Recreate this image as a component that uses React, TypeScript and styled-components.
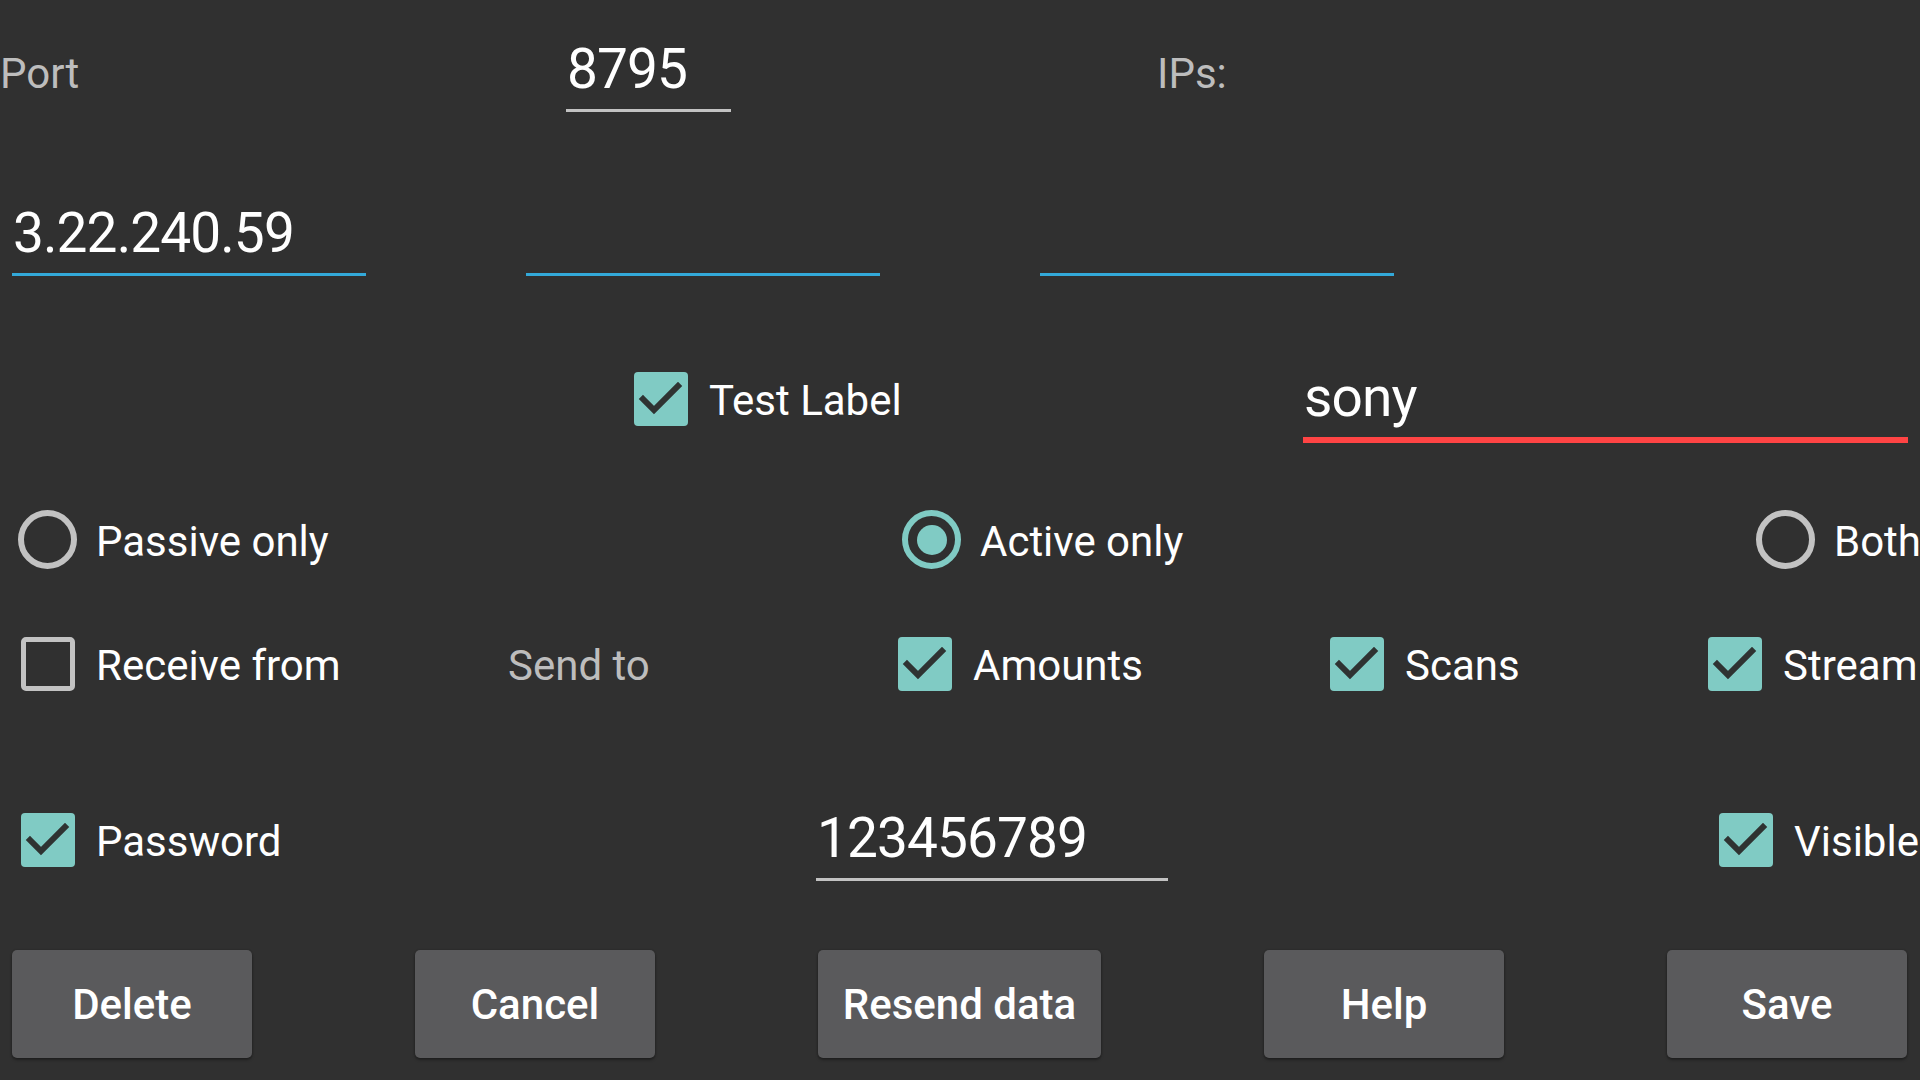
import React from "react";
import styled, { createGlobalStyle } from "styled-components";

const Global = createGlobalStyle`
  html, body {
    margin: 0;
    padding: 0;
    background: #303030;
  }
  body {
    font-family: Roboto, "Noto Sans", "Liberation Sans", sans-serif;
    color: #ffffff;
    overflow: hidden;
  }
`;

const Page = styled.div`
  width: 1920px;
  height: 1080px;
  background: #303030;
  display: flex;
  flex-direction: column;
  overflow: hidden;
`;

const Row = styled.div<{ $mt: number; $pl?: number; $cols?: string }>`
  display: grid;
  grid-template-columns: ${(p) => p.$cols || "auto"};
  align-items: start;
  margin-top: ${(p) => p.$mt}px;
  padding-left: ${(p) => p.$pl ?? 0}px;
`;

const BaselineRow = styled.div<{ $mt: number }>`
  display: flex;
  align-items: baseline;
  margin-top: ${(p) => p.$mt}px;
`;

const Label = styled.span<{ $w?: number; $muted?: boolean; $ml?: number }>`
  display: inline-block;
  font-size: 42px;
  line-height: 42px;
  color: ${(p) => (p.$muted ? "#bdbdbd" : "#ffffff")};
  white-space: nowrap;
  ${(p) => (p.$w ? `width: ${p.$w}px;` : "")}
  ${(p) => (p.$ml ? `margin-left: ${p.$ml}px;` : "")}
`;

const Edit = styled.div<{ $w: number; $line: string; $thick?: number; $ml?: number }>`
  width: ${(p) => p.$w}px;
  font-size: 55px;
  line-height: 55px;
  letter-spacing: -0.9px;
  height: 55px;
  padding: 0 0 12px 1px;
  border-bottom: ${(p) => p.$thick ?? 3}px solid ${(p) => p.$line};
  color: #ffffff;
  white-space: nowrap;
  ${(p) => (p.$ml ? `margin-left: ${p.$ml}px;` : "")}
`;

const EditRow = styled.div<{ $mt: number }>`
  display: flex;
  gap: 160px;
  padding-left: 12px;
  margin-top: ${(p) => p.$mt}px;
`;

const Option = styled.div<{ $mt?: number; $gap?: number }>`
  display: flex;
  align-items: center;
  gap: ${(p) => p.$gap ?? 21}px;
  margin-top: ${(p) => p.$mt ?? 0}px;
`;

const OptionText = styled.span<{ $muted?: boolean }>`
  font-size: 42px;
  line-height: 50px;
  margin-top: 4px;
  white-space: nowrap;
  color: ${(p) => (p.$muted ? "#bdbdbd" : "#ffffff")};
`;

const Box = styled.div<{ $checked: boolean }>`
  flex: none;
  box-sizing: border-box;
  width: 54px;
  height: 54px;
  border-radius: ${(p) => (p.$checked ? 4 : 5)}px;
  background: ${(p) => (p.$checked ? "#80cbc4" : "transparent")};
  border: ${(p) => (p.$checked ? "none" : "5px solid #c2c2c2")};
  display: flex;
  align-items: center;
  justify-content: center;
`;

const RadioRing = styled.div<{ $on: boolean }>`
  flex: none;
  box-sizing: border-box;
  width: 59px;
  height: 59px;
  border-radius: 50%;
  border: 6px solid ${(p) => (p.$on ? "#80cbc4" : "#c2c2c2")};
  display: flex;
  align-items: center;
  justify-content: center;
`;

const RadioDot = styled.div`
  width: 30px;
  height: 30px;
  border-radius: 50%;
  background: #80cbc4;
`;

const ButtonBar = styled.div<{ $mt: number }>`
  display: flex;
  justify-content: space-between;
  padding: 0 13px 0 12px;
  margin-top: ${(p) => p.$mt}px;
`;

const Button = styled.button<{ $w: number }>`
  width: ${(p) => p.$w}px;
  height: 108px;
  border: none;
  border-radius: 5px;
  background: #5a5a5c;
  color: #ffffff;
  font-family: Roboto, "Noto Sans", "Liberation Sans", sans-serif;
  font-size: 42px;
  font-weight: 500;
  padding: 0;
  box-shadow: 0 2px 3px rgba(0, 0, 0, 0.35), 0 0 2px rgba(0, 0, 0, 0.2);
  cursor: pointer;
`;

const Check = () => (
  <svg width="54" height="54" viewBox="0 0 54 54">
    <polyline
      points="9,27 20,38 44,14"
      fill="none"
      stroke="#2f3332"
      strokeWidth="6"
      strokeLinecap="square"
      strokeLinejoin="miter"
    />
  </svg>
);

const CheckOption = ({
  label,
  checked,
  mt,
}: {
  label: string;
  checked: boolean;
  mt?: number;
}) => (
  <Option $mt={mt} $gap={21}>
    <Box $checked={checked}>{checked && <Check />}</Box>
    <OptionText>{label}</OptionText>
  </Option>
);

const RadioOption = ({ label, on }: { label: string; on: boolean }) => (
  <Option $gap={19}>
    <RadioRing $on={on}>{on && <RadioDot />}</RadioRing>
    <OptionText>{label}</OptionText>
  </Option>
);

export default function App() {
  return (
    <>
      <Global />
      <Page>
        <BaselineRow $mt={42}>
          <Label $w={566} $muted>
            Port
          </Label>
          <Edit $w={164} $line="#c2c2c2">
            8795
          </Edit>
          <Label $muted $ml={426}>
            IPs:
          </Label>
        </BaselineRow>

        <EditRow $mt={94}>
          <Edit $w={353} $line="#33a9d9">
            3.22.240.59
          </Edit>
          <Edit $w={353} $line="#33a9d9" />
          <Edit $w={353} $line="#33a9d9" />
        </EditRow>

        <Row $mt={94} $pl={634} $cols="669px auto">
          <CheckOption label="Test Label" checked mt={2} />
          <Edit $w={604} $line="#ff4444" $thick={6}>
            sony
          </Edit>
        </Row>

        <Row $mt={67} $pl={18} $cols="884px 854px auto">
          <RadioOption label="Passive only" on={false} />
          <RadioOption label="Active only" on />
          <RadioOption label="Both" on={false} />
        </Row>

        <Row $mt={68} $pl={21} $cols="487px 390px 432px 378px auto">
          <CheckOption label="Receive from" checked={false} />
          <OptionText $muted>Send to</OptionText>
          <CheckOption label="Amounts" checked />
          <CheckOption label="Scans" checked />
          <CheckOption label="Stream" checked />
        </Row>

        <Row $mt={120} $pl={21} $cols="795px 903px auto">
          <CheckOption label="Password" checked mt={2} />
          <Edit $w={351} $line="#c2c2c2">
            123456789
          </Edit>
          <CheckOption label="Visible" checked mt={2} />
        </Row>

        <ButtonBar $mt={69}>
          <Button $w={240}>Delete</Button>
          <Button $w={240}>Cancel</Button>
          <Button $w={283}>Resend data</Button>
          <Button $w={240}>Help</Button>
          <Button $w={240}>Save</Button>
        </ButtonBar>
      </Page>
    </>
  );
}
